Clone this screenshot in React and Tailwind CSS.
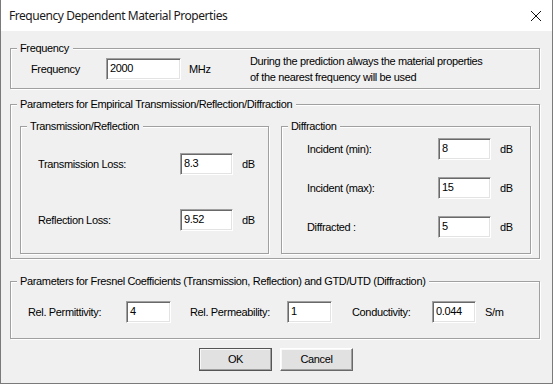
const dlg = { fontFamily: '"Liberation Sans", Arial, sans-serif' }

function Group({ title, className = '', children }) {
  return (
    <div className={`relative border border-[#a0a0a0] shadow-[inset_1px_1px_0_#fff,1px_1px_0_#fff] ${className}`}>
      <span className="absolute left-[6px] -top-[8px] bg-[#f0f0f0] pl-[3px] pr-[4px] leading-[14px] whitespace-nowrap">{title}</span>
      {children}
    </div>
  )
}

function Field({ value, w = 'w-[53px]' }) {
  return (
    <div className={`${w} h-[22px] shrink-0 bg-white border border-t-[#a0a0a0] border-l-[#a0a0a0] border-b-white border-r-white shadow-[inset_1px_1px_0_#696969,inset_-1px_-1px_0_#e3e3e3] pl-[3px] pt-[3px] leading-[13px]`}>
      {value}
    </div>
  )
}

function Btn({ label, primary }) {
  return (
    <div className={`w-[73px] h-[23px] flex items-center justify-center bg-[#e1e1e1] border ${primary ? 'border-[#555]' : 'border-t-white border-l-white border-b-[#696969] border-r-[#696969]'} shadow-[inset_-1px_-1px_0_#a0a0a0,inset_1px_1px_0_#f8f8f8]`}>
      {label}
    </div>
  )
}

export default function App() {
  return (
    <div className="w-[553px] h-[385px] bg-white overflow-hidden">
      <div className="h-[384px] flex flex-col border-x border-b border-[#7a7a7a]">
        {/* title bar */}
        <div className="h-[31px] shrink-0 bg-white flex items-center justify-between pl-[8px] pr-[9px]">
          <span className="text-[12px] text-[#1a1a1a] tracking-[-0.45px]" style={{ fontFamily: '"Noto Sans", "Open Sans", sans-serif' }}>
            Frequency Dependent Material Properties
          </span>
          <svg width="12" height="12" viewBox="0 0 12 12" className="mr-[1px]">
            <path d="M1 1 L11 11 M11 1 L1 11" stroke="#111" strokeWidth="1" />
          </svg>
        </div>

        {/* body */}
        <div className="flex-1 bg-[#f0f0f0] pl-[9px] pr-[12px] pt-[17px] text-[11px] text-black tracking-[-0.35px]" style={dlg}>
          <Group title="Frequency" className="h-[41px]">
            <div className="flex items-center pl-[20px] pt-[4px]">
              <span className="w-[75px]">Frequency</span>
              <Field value="2000" w="w-[75px]" />
              <span className="w-[69px] pl-[8px]">MHz</span>
              <div className="leading-[16px]">
                <div>During the prediction always the material properties</div>
                <div>of the nearest frequency will be used</div>
              </div>
            </div>
          </Group>

          <Group title="Parameters for Empirical Transmission/Reflection/Diffraction" className="mt-[15px] h-[155px]">
            <div className="flex gap-[12px] pl-[9px] pt-[21px]">
              <Group title="Transmission/Reflection" className="w-[249px] h-[128px]">
                <div className="flex flex-col gap-[34px] pl-[17px] pt-[26px]">
                  <div className="flex items-center">
                    <span className="w-[142px]">Transmission Loss:</span>
                    <Field value="8.3" />
                    <span className="pl-[9px]">dB</span>
                  </div>
                  <div className="flex items-center">
                    <span className="w-[142px]">Reflection Loss:</span>
                    <Field value="9.52" />
                    <span className="pl-[9px]">dB</span>
                  </div>
                </div>
              </Group>
              <Group title="Diffraction" className="w-[250px] h-[128px]">
                <div className="flex flex-col gap-[17px] pl-[25px] pt-[11px]">
                  {[['Incident (min):', '8'], ['Incident (max):', '15'], ['Diffracted :', '5']].map(([l, v]) => (
                    <div key={l} className="flex items-center">
                      <span className="w-[131px]">{l}</span>
                      <Field value={v} />
                      <span className="pl-[9px]">dB</span>
                    </div>
                  ))}
                </div>
              </Group>
            </div>
          </Group>

          <Group title="Parameters for Fresnel Coefficients (Transmission, Reflection) and GTD/UTD (Diffraction)" className="mt-[22px] h-[58px]">
            <div className="flex items-center pl-[17px] pt-[19px]">
              <span className="w-[98px]">Rel. Permittivity:</span>
              <Field value="4" w="w-[45px]" />
              <span className="w-[116px] pl-[19px]">Rel. Permeability:</span>
              <Field value="1" w="w-[45px]" />
              <span className="w-[100px] pl-[20px]">Conductivity:</span>
              <Field value="0.044" w="w-[44px]" />
              <span className="pl-[9px]">S/m</span>
            </div>
          </Group>

          <div className="flex justify-center gap-[8px] mt-[9px] pl-[2px]">
            <Btn label="OK" primary />
            <Btn label="Cancel" />
          </div>
        </div>
      </div>
    </div>
  )
}
